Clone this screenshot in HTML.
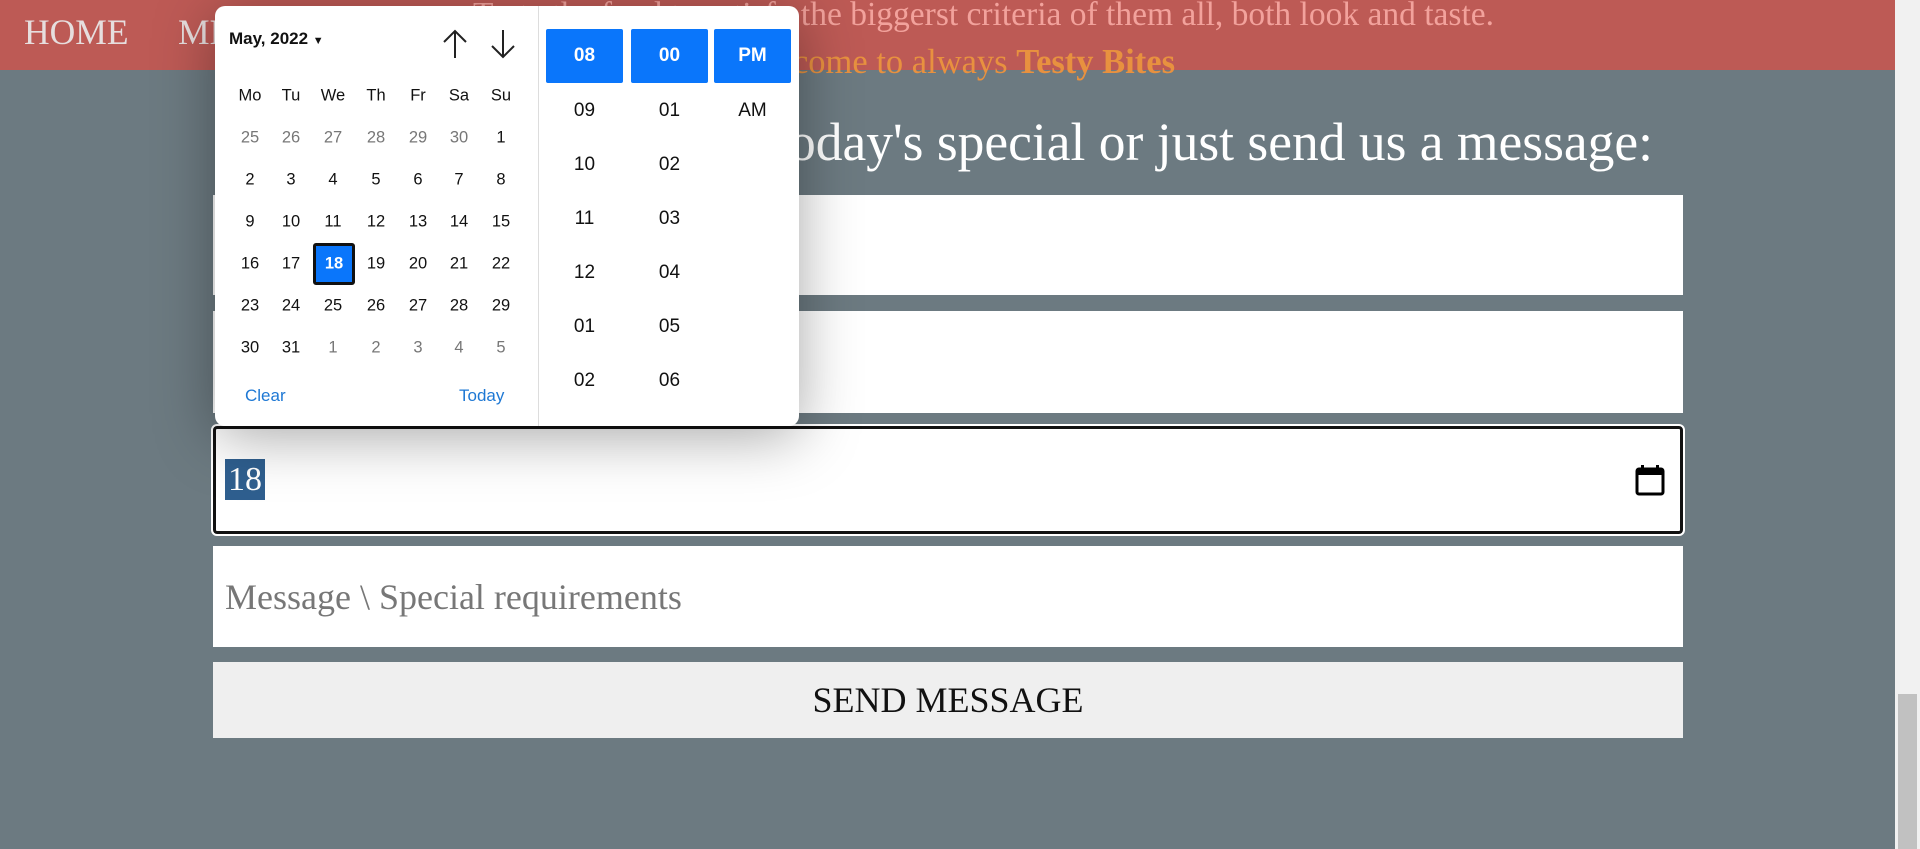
<!DOCTYPE html>
<html><head><meta charset="utf-8"><style>
*{box-sizing:border-box;margin:0;padding:0}
body{width:1920px;height:849px;overflow:hidden;background:#6c7a81;position:relative;font-family:"Liberation Serif",serif}
.nav{position:absolute;left:0;top:0;width:1895px;height:70px;background:#bd5a55}
.nav span{position:absolute;top:11px;font-size:35.5px;color:#e6dede}
.t1{position:absolute;right:426px;top:-4px;font-size:33.5px;color:#f2a29c;white-space:nowrap}
.t2{position:absolute;right:745px;top:43px;font-size:34.5px;color:#e8913f;white-space:nowrap}
.h{position:absolute;right:267px;top:111px;font-size:53.5px;color:#fff;white-space:nowrap}
.inp{position:absolute;left:213px;width:1470px;background:#fff}
.btn{position:absolute;left:213px;top:662px;width:1470px;height:76px;background:#efefef;text-align:center;font-size:36px;line-height:76px;color:#111}
.sb{position:absolute;right:0;top:0;width:25px;height:849px;background:#f1f1f1}
.thumb{position:absolute;right:3px;top:694px;width:19px;height:155px;background:#c1c1c1}
.pk{position:absolute;left:215px;top:6px;width:584px;height:420px;background:#fff;border-radius:10px;box-shadow:0 10px 60px rgba(0,0,0,.35);font-family:"Liberation Sans",sans-serif}
.pk .d{position:absolute;left:323px;top:0;width:1px;height:420px;background:#ddd}
.c{position:absolute;width:40px;text-align:center;font-size:16.5px;color:#111;transform:translate(-20px,-50%)}
.g{color:#777}
.tb{position:absolute;top:23px;height:54px;width:77px;background:#0a76fb;color:#fff;font-weight:bold;font-size:19px;text-align:center;line-height:54px;border-radius:2px}
.tc{position:absolute;width:77px;text-align:center;font-size:19px;color:#111;transform:translateY(-50%)}
</style></head><body>
<div class="nav"><span style="left:24px">HOME</span><span style="left:178px">MENU</span></div>
<div class="t1">Taste the food to satisfy the biggerst criteria of them all, both look and taste.</div>
<div class="t2">Welcome to always <b>Testy Bites</b></div>
<div class="h">Reserve a table, ask for today's special or just send us a message:</div>
<div class="inp" style="top:195px;height:100px"></div>
<div class="inp" style="top:311px;height:102px"></div>
<div class="inp" style="top:426px;height:108px;border:3px solid #111;border-radius:4px;outline:2px solid #fff">
<span style="position:absolute;left:9px;top:30px;background:#2f5f8f;color:#fff;font-size:34px;line-height:41px;padding:0 3px">18</span>
<svg style="position:absolute;left:1418px;top:34px" width="32" height="34" viewBox="0 0 32 34"><rect x="3" y="6" width="26" height="25" rx="2" fill="none" stroke="#000" stroke-width="3"/><rect x="3" y="6" width="26" height="6" fill="#000"/><rect x="7" y="2" width="3" height="6" fill="#000"/><rect x="22" y="2" width="3" height="6" fill="#000"/></svg>
</div>
<div class="inp" style="top:546px;height:101px"><span style="position:absolute;left:12px;top:30px;font-size:36px;color:#777">Message \ Special requirements</span></div>
<div class="btn">SEND MESSAGE</div>
<div class="sb"><div class="thumb"></div></div>
<div class="pk">
<div style="position:absolute;left:14px;top:23px;font-size:17px;font-weight:bold;color:#111">May, 2022 <span style="font-size:11px">▼</span></div>
<svg style="position:absolute;left:226px;top:22px" width="28" height="32" viewBox="0 0 28 32"><path d="M14 30V3M3 14L14 3l11 11" fill="none" stroke="#222" stroke-width="2"/></svg>
<svg style="position:absolute;left:274px;top:22px" width="28" height="32" viewBox="0 0 28 32"><path d="M14 2v27M3 18l11 11 11-11" fill="none" stroke="#222" stroke-width="2"/></svg>
<div class="d"></div>
<div style="position:absolute;left:98px;top:237px;width:42px;height:42px;background:#0a76fb;border:3px solid #111;border-radius:3px"></div>
<div style="position:absolute;left:30px;top:380px;font-size:17px;color:#1e78d4">Clear</div>
<div style="position:absolute;left:244px;top:380px;font-size:17px;color:#1e78d4">Today</div>
<div class="tb" style="left:331px">08</div><div class="tb" style="left:416px">00</div><div class="tb" style="left:499px">PM</div>
<div class="tc" style="left:331px;top:105px">09</div><div class="tc" style="left:416px;top:105px">01</div><div class="tc" style="left:499px;top:105px">AM</div>
<div class="tc" style="left:331px;top:159px">10</div><div class="tc" style="left:416px;top:159px">02</div>
<div class="tc" style="left:331px;top:213px">11</div><div class="tc" style="left:416px;top:213px">03</div>
<div class="tc" style="left:331px;top:267px">12</div><div class="tc" style="left:416px;top:267px">04</div>
<div class="tc" style="left:331px;top:321px">01</div><div class="tc" style="left:416px;top:321px">05</div>
<div class="tc" style="left:331px;top:375px">02</div><div class="tc" style="left:416px;top:375px">06</div>
<div class="c" style="left:35px;top:90px">Mo</div><div class="c" style="left:76px;top:90px">Tu</div><div class="c" style="left:118px;top:90px">We</div><div class="c" style="left:161px;top:90px">Th</div><div class="c" style="left:203px;top:90px">Fr</div><div class="c" style="left:244px;top:90px">Sa</div><div class="c" style="left:286px;top:90px">Su</div>
<div class="c g" style="left:35px;top:132px">25</div><div class="c g" style="left:76px;top:132px">26</div><div class="c g" style="left:118px;top:132px">27</div><div class="c g" style="left:161px;top:132px">28</div><div class="c g" style="left:203px;top:132px">29</div><div class="c g" style="left:244px;top:132px">30</div><div class="c" style="left:286px;top:132px">1</div>
<div class="c" style="left:35px;top:174px">2</div><div class="c" style="left:76px;top:174px">3</div><div class="c" style="left:118px;top:174px">4</div><div class="c" style="left:161px;top:174px">5</div><div class="c" style="left:203px;top:174px">6</div><div class="c" style="left:244px;top:174px">7</div><div class="c" style="left:286px;top:174px">8</div>
<div class="c" style="left:35px;top:216px">9</div><div class="c" style="left:76px;top:216px">10</div><div class="c" style="left:118px;top:216px">11</div><div class="c" style="left:161px;top:216px">12</div><div class="c" style="left:203px;top:216px">13</div><div class="c" style="left:244px;top:216px">14</div><div class="c" style="left:286px;top:216px">15</div>
<div class="c" style="left:35px;top:258px">16</div><div class="c" style="left:76px;top:258px">17</div><div class="c" style="left:119px;top:258px;color:#fff;font-weight:bold">18</div><div class="c" style="left:161px;top:258px">19</div><div class="c" style="left:203px;top:258px">20</div><div class="c" style="left:244px;top:258px">21</div><div class="c" style="left:286px;top:258px">22</div>
<div class="c" style="left:35px;top:300px">23</div><div class="c" style="left:76px;top:300px">24</div><div class="c" style="left:118px;top:300px">25</div><div class="c" style="left:161px;top:300px">26</div><div class="c" style="left:203px;top:300px">27</div><div class="c" style="left:244px;top:300px">28</div><div class="c" style="left:286px;top:300px">29</div>
<div class="c" style="left:35px;top:342px">30</div><div class="c" style="left:76px;top:342px">31</div><div class="c g" style="left:118px;top:342px">1</div><div class="c g" style="left:161px;top:342px">2</div><div class="c g" style="left:203px;top:342px">3</div><div class="c g" style="left:244px;top:342px">4</div><div class="c g" style="left:286px;top:342px">5</div>
</div>
</body></html>
